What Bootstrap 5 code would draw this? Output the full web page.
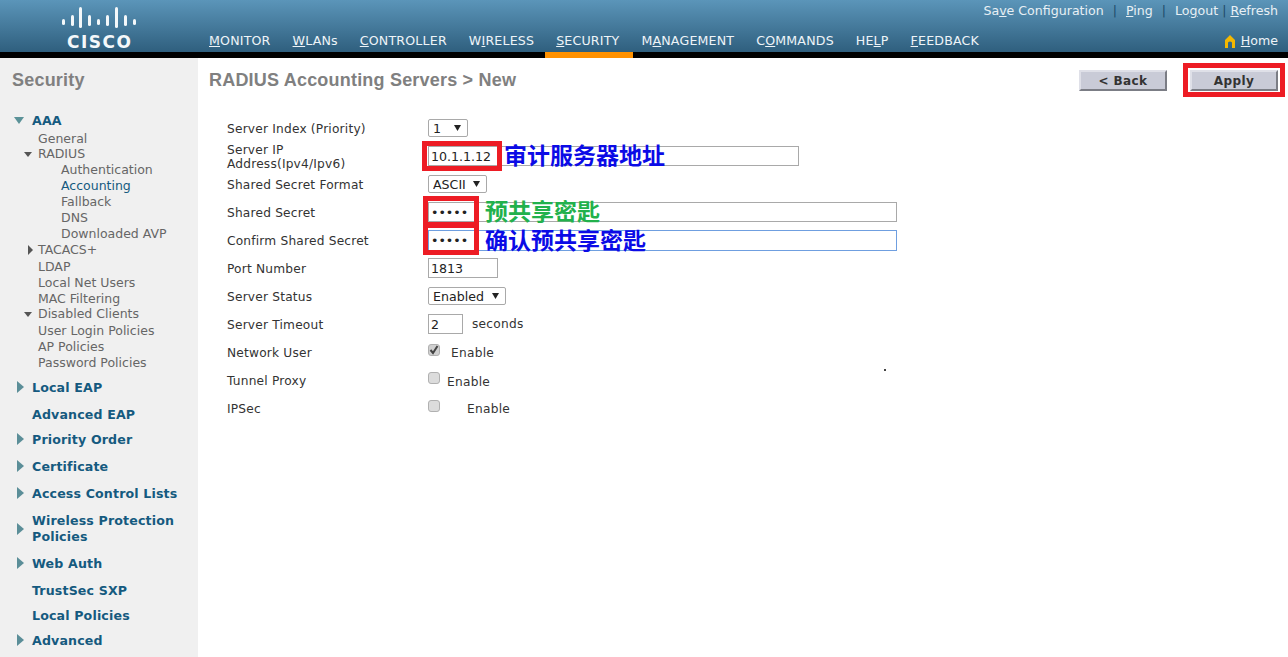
<!DOCTYPE html>
<html lang="en"><head><meta charset="utf-8"><title>RADIUS Accounting Servers</title>
<link href="https://cdn.jsdelivr.net/npm/bootstrap@5.3.0/dist/css/bootstrap.min.css" rel="stylesheet">
<style>
html,body{height:657px;overflow:hidden}
body{font-family:"DejaVu Sans",Verdana,sans-serif;font-size:12px;color:#333;background:#fff}
a{color:inherit;text-decoration:none}
.topbar{height:58px;background:#000;position:relative}
.topfill{height:52px;background:linear-gradient(#5b95b9,#2f5f7e)}
.logo-wrap{width:198px;height:52px;padding-left:62px;padding-top:7px;color:#f4f8fa}
.logo-word{font-weight:700;font-size:17px;line-height:14px;letter-spacing:1.5px;margin:6px 0 0 5px}
.nav-main{gap:22px;padding-top:33px;margin-left:11px;color:#eef4f8;font-size:12.6px;letter-spacing:.18px;line-height:16px}
.nav-tab{position:absolute;left:545px;top:52px;width:88px;height:6px;background:#ff9100}
.top-links{position:absolute;right:10px;top:3px;color:#e8f0f5;font-size:12.6px;line-height:15px;gap:9px}
.sep{color:#1d4a6a}
.sep-tight{margin:0 -5px}
.home-link{position:absolute;right:10px;top:33px;color:#eef4f8;font-size:12.6px;line-height:16px;gap:5px}
.side{width:198px;height:599px;background:#f0f0f0;flex:none;padding-left:12px;position:relative}
.side-title{font:700 18px/20px "Liberation Sans",Arial,sans-serif;letter-spacing:.2px;color:#808080;height:54px;padding-top:12px}
.side-h{height:27px;line-height:17px;color:#155a7f;font-weight:700;font-size:12.6px;letter-spacing:.15px;padding-left:20px;position:relative;display:flex;align-items:flex-start}
.side-s{height:16px;line-height:16px;color:#666;font-size:12.5px;padding-left:26px;position:relative}
.side-d{padding-left:49px}
.side-cur{color:#155a7f}
.tri-r,.tri-d,.tri-sr,.tri-sd{position:absolute;width:0;height:0}
.tri-r{left:5px;top:2px;border-left:7px solid #5b8e98;border-top:6px solid transparent;border-bottom:6px solid transparent}
.tri-d{left:2px;top:5px;border-top:7px solid #5b9298;border-left:5.5px solid transparent;border-right:5.5px solid transparent}
.tri-sd{left:12px;top:6px;border-top:5px solid #555;border-left:4.5px solid transparent;border-right:4.5px solid transparent}
.tri-sr{left:16px;top:3px;border-left:5px solid #555;border-top:5px solid transparent;border-bottom:5px solid transparent}
.main-pane{flex:1;position:relative;padding:0 0 0 11px}
.page-head{height:56px;padding-top:12px}
.page-title{font:700 18px/20px "Liberation Sans",Arial,sans-serif;letter-spacing:.2px;color:#808080}
.actions{position:absolute;left:881px;top:12px;gap:23px}
.wbtn{width:88px;height:21px;padding:1px 0 0;border-radius:0;font-weight:700;font-size:12px;line-height:16px;color:#333;background:#c9cbd7;border:2px solid;border-color:#dfe0e8 #7b7d85 #7b7d85 #dfe0e8;letter-spacing:.4px}
.wbtn:hover{background:#c9cbd7;color:#333;border-color:#dfe0e8 #7b7d85 #7b7d85 #dfe0e8}
.apply-box{position:relative}
.red-box{position:absolute;border:5px solid #ed1c24;pointer-events:none}
.red-apply{left:-7px;top:-7px;width:102px;height:34px}
.frm{padding-left:18px}
.frow{height:28px;display:flex;align-items:center}
.flabel{width:201px;flex:none;font-size:12.2px;line-height:14px;color:#333;letter-spacing:.2px;padding-top:2px}
.fval{position:relative;flex:1;display:flex;align-items:center;height:100%;font-size:12.2px;letter-spacing:.25px}
.tinput{height:20px;padding:0 2px;border:1px solid #a9a9a9;border-radius:0;font:12.6px "DejaVu Sans",sans-serif;color:#222;box-shadow:none;flex:none;display:block}
.tinput:focus{box-shadow:none;border-color:#a9a9a9}
.w-ip{width:371px}.w-sec{width:469px}.w-port{width:70px}.w-to{width:35px}
.focus-blue,.focus-blue:focus{border:1px solid #6f9fe0;height:21px}
.tsel{height:18px;padding:1px 0 0 4px;border:1px solid #a9a9a9;border-radius:2px;font:12.6px/15px "DejaVu Sans",sans-serif;color:#222;background-color:#fff;background-image:url("data:image/svg+xml,%3Csvg xmlns='http://www.w3.org/2000/svg' width='8' height='7'%3E%3Cpath d='M0 0h8L4 7z' fill='%23222'/%3E%3C/svg%3E");background-repeat:no-repeat;background-position:right 6px center;background-size:7px 6px}
.tsel:focus{box-shadow:none;border-color:#a9a9a9}
.s-idx{width:40px}.s-fmt{width:59px}.s-stat{width:78px}
.cbx{width:12px;height:12px;margin:0;border:1px solid #b0b0b0;border-radius:2px;background-color:#dcdcdc;flex:none;position:relative;top:-2px}
.cbx:checked{background-color:#d0d0d0;border-color:#b0b0b0;background-image:url("data:image/svg+xml,%3Csvg xmlns='http://www.w3.org/2000/svg' viewBox='0 0 12 12'%3E%3Cpath d='M2.5 6l2.5 3L9.5 2' fill='none' stroke='%23444' stroke-width='2'/%3E%3C/svg%3E");background-size:12px}
.cbx:focus{box-shadow:none}
.en-1{margin-left:11px;padding-top:3px}.en-2{margin-left:7px;padding-top:4px}.en-3{margin-left:27px;padding-top:2px}
.en-sec{margin-left:9px;padding-top:1px}
.note{position:absolute;font:700 23px/24px "Noto Sans CJK SC","Liberation Sans",sans-serif;letter-spacing:0;white-space:nowrap}
.n-ip{left:76px;top:0;color:#0b0be6}
.n-sh{left:57px;top:0;color:#22b14c}
.n-cf{left:57px;top:1px;color:#0b0be6}
.r-ip{left:-6px;top:-1px;width:80px;height:30px}
.r-s1{left:-5px;top:-2px;width:56px;height:30px;border-bottom-width:4px}
.r-s2{left:-5px;top:-2px;width:56px;height:31px;border-top-width:4px}
.speck{position:absolute;left:686px;top:311px;width:2px;height:2px;background:#444}
</style></head><body>
<header class="topbar">
  <div class="topfill d-flex">
    <div class="logo-wrap">
      <svg width="76" height="22" viewBox="0 0 76 22" class="d-block" fill="#f4f8fa" aria-hidden="true">
        <rect x="0" y="12" width="3" height="6" rx="1.5"/><rect x="9" y="8" width="3" height="11" rx="1.5"/><rect x="17" y="0" width="3" height="21" rx="1.5"/><rect x="26" y="8" width="3" height="11" rx="1.5"/><rect x="35" y="12" width="3" height="6" rx="1.5"/><rect x="44" y="8" width="3" height="11" rx="1.5"/><rect x="53" y="0" width="3" height="21" rx="1.5"/><rect x="62" y="8" width="3" height="11" rx="1.5"/><rect x="71" y="12" width="3" height="6" rx="1.5"/>
      </svg>
      <div class="logo-word">CISCO</div>
    </div>
    <nav class="d-flex nav-main">
      <a href="#"><u>M</u>ONITOR</a><a href="#"><u>W</u>LANs</a><a href="#"><u>C</u>ONTROLLER</a><a href="#">W<u>I</u>RELESS</a><a href="#"><u>S</u>ECURITY</a><a href="#">M<u>A</u>NAGEMENT</a><a href="#">C<u>O</u>MMANDS</a><a href="#">HE<u>L</u>P</a><a href="#"><u>F</u>EEDBACK</a>
    </nav>
  </div>
  <div class="nav-tab"></div>
  <div class="top-links d-flex">
    <a href="#">Sa<u>v</u>e Configuration</a><span class="sep">|</span><a href="#"><u>P</u>ing</a><span class="sep">|</span><a href="#">Lo<u>g</u>out</a><span class="sep sep-tight">|</span><a href="#"><u>R</u>efresh</a>
  </div>
  <a href="#" class="home-link d-flex align-items-center">
    <svg width="12" height="13" viewBox="0 0 12 13" aria-hidden="true"><path d="M6 0 11 5V13H8V7.5Q6 5.5 4 7.5V13H1V5Z" fill="#f5b800"/></svg>
    <span><u>H</u>ome</span>
  </a>
</header>
<div class="d-flex">
  <aside class="side">
    <div class="side-title">Security</div>
    <div class="side-h" style="height:19px"><i class="tri-d"></i>AAA</div>
    <div class="side-s" style="height:15px">General</div>
    <div class="side-s" style="height:16px"><i class="tri-sd"></i>RADIUS</div>
    <div class="side-s side-d">Authentication</div>
    <div class="side-s side-d side-cur">Accounting</div>
    <div class="side-s side-d">Fallback</div>
    <div class="side-s side-d">DNS</div>
    <div class="side-s side-d">Downloaded AVP</div>
    <div class="side-s" style="height:17px"><i class="tri-sr"></i>TACACS+</div>
    <div class="side-s">LDAP</div>
    <div class="side-s">Local Net Users</div>
    <div class="side-s" style="height:15px">MAC Filtering</div>
    <div class="side-s" style="height:17px"><i class="tri-sd"></i>Disabled Clients</div>
    <div class="side-s">User Login Policies</div>
    <div class="side-s">AP Policies</div>
    <div class="side-s" style="height:17px">Password Policies</div>
    <div style="height:7px"></div>
    <div class="side-h"><i class="tri-r"></i>Local EAP</div>
    <div class="side-h" style="height:25px">Advanced EAP</div>
    <div class="side-h"><i class="tri-r"></i>Priority Order</div>
    <div class="side-h"><i class="tri-r"></i>Certificate</div>
    <div class="side-h" style="height:28px"><i class="tri-r"></i>Access Control Lists</div>
    <div class="side-h" style="height:42px;line-height:16px"><i class="tri-r" style="top:10px"></i>Wireless Protection<br>Policies</div>
    <div class="side-h"><i class="tri-r"></i>Web Auth</div>
    <div class="side-h" style="height:25px">TrustSec SXP</div>
    <div class="side-h" style="height:25px">Local Policies</div>
    <div class="side-h"><i class="tri-r"></i>Advanced</div>
  </aside>
  <main class="main-pane">
    <div class="page-head"><div class="page-title">RADIUS Accounting Servers &gt; New</div></div>
    <div class="actions d-flex">
      <button class="btn wbtn" type="button">&lt; Back</button>
      <div class="apply-box"><button class="btn wbtn" type="button">Apply</button><div class="red-box red-apply"></div></div>
    </div>
    <form class="frm">
      <div class="frow"><div class="flabel">Server Index (Priority)</div><div class="fval"><select class="form-select tsel s-idx"><option>1</option></select></div></div>
      <div class="frow"><div class="flabel">Server IP<br>Address(Ipv4/Ipv6)</div><div class="fval"><input class="form-control tinput w-ip" value="10.1.1.12"><div class="red-box r-ip"></div><span class="note n-ip">审计服务器地址</span></div></div>
      <div class="frow"><div class="flabel">Shared Secret Format</div><div class="fval"><select class="form-select tsel s-fmt"><option>ASCII</option></select></div></div>
      <div class="frow"><div class="flabel">Shared Secret</div><div class="fval"><input type="password" class="form-control tinput w-sec" value="*****"><div class="red-box r-s1"></div><span class="note n-sh">预共享密匙</span></div></div>
      <div class="frow"><div class="flabel">Confirm Shared Secret</div><div class="fval"><input type="password" class="form-control tinput w-sec focus-blue" value="*****"><div class="red-box r-s2"></div><span class="note n-cf">确认预共享密匙</span></div></div>
      <div class="frow"><div class="flabel">Port Number</div><div class="fval"><input class="form-control tinput w-port" value="1813"></div></div>
      <div class="frow"><div class="flabel">Server Status</div><div class="fval"><select class="form-select tsel s-stat"><option>Enabled</option></select></div></div>
      <div class="frow"><div class="flabel">Server Timeout</div><div class="fval"><input class="form-control tinput w-to" value="2"><span class="en-sec">seconds</span></div></div>
      <div class="frow"><div class="flabel">Network User</div><div class="fval"><input type="checkbox" class="form-check-input cbx" checked><span class="en-1">Enable</span></div></div>
      <div class="frow"><div class="flabel">Tunnel Proxy</div><div class="fval"><input type="checkbox" class="form-check-input cbx"><span class="en-2">Enable</span></div></div>
      <div class="frow"><div class="flabel">IPSec</div><div class="fval"><input type="checkbox" class="form-check-input cbx"><span class="en-3">Enable</span></div></div>
    </form>
    <div class="speck"></div>
  </main>
</div>
<script src="https://cdn.jsdelivr.net/npm/bootstrap@5.3.0/dist/js/bootstrap.bundle.min.js"></script>
</body></html>
